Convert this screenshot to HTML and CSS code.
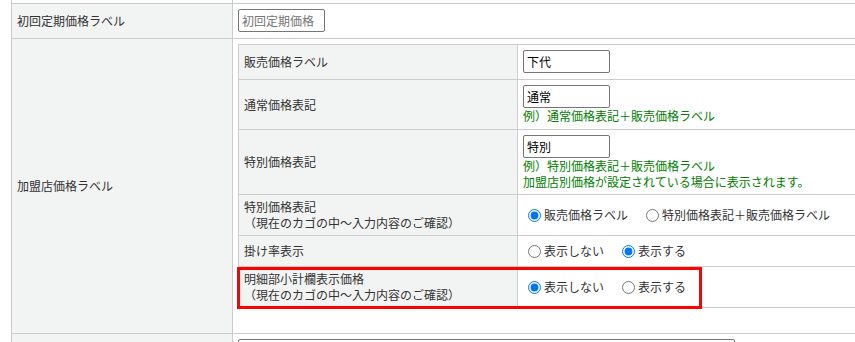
FILE: index.html
```html
<!DOCTYPE html>
<html lang="ja">
<head>
<meta charset="utf-8">
<title>加盟店価格ラベル</title>
<link rel="stylesheet" href="styles.css">
</head>
<body>
<div class="page">
  <table class="form">
    <tr class="blank-row"><th class="blank"></th><td class="blank"></td></tr>
    <tr>
      <th class="main-th">初回定期価格ラベル</th>
      <td class="main-td"><input class="txt" type="text" placeholder="初回定期価格"></td>
    </tr>
    <tr>
      <th class="main-th">加盟店価格ラベル</th>
      <td class="main-td">
        <div class="sub-wrap">
          <table class="sub">
            <tr>
              <th class="sub-th">販売価格ラベル</th>
              <td class="sub-td"><input class="txt" type="text" value="下代"></td>
            </tr>
            <tr>
              <th class="sub-th">通常価格表記</th>
              <td class="sub-td">
                <input class="txt" type="text" value="通常">
                <p class="note">例）通常価格表記＋販売価格ラベル</p>
              </td>
            </tr>
            <tr>
              <th class="sub-th">特別価格表記</th>
              <td class="sub-td">
                <input class="txt" type="text" value="特別">
                <p class="note two">例）特別価格表記＋販売価格ラベル<br>加盟店別価格が設定されている場合に表示されます。</p>
              </td>
            </tr>
            <tr>
              <th class="sub-th">特別価格表記<br>（現在のカゴの中～入力内容のご確認）</th>
              <td class="sub-td">
                <div class="radios">
                  <label class="opt"><input type="radio" name="sp" checked>販売価格ラベル</label>
                  <label class="opt"><input type="radio" name="sp">特別価格表記＋販売価格ラベル</label>
                </div>
              </td>
            </tr>
            <tr>
              <th class="sub-th">掛け率表示</th>
              <td class="sub-td">
                <div class="radios">
                  <label class="opt"><input type="radio" name="rate">表示しない</label>
                  <label class="opt"><input type="radio" name="rate" checked>表示する</label>
                </div>
              </td>
            </tr>
            <tr>
              <th class="sub-th">明細部小計欄表示価格<br>（現在のカゴの中～入力内容のご確認）</th>
              <td class="sub-td">
                <div class="radios">
                  <label class="opt"><input type="radio" name="sub" checked>表示しない</label>
                  <label class="opt"><input type="radio" name="sub">表示する</label>
                </div>
              </td>
            </tr>
          </table>
          <div class="highlight"></div>
        </div>
      </td>
    </tr>
    <tr>
      <th class="main-th"></th>
      <td class="main-td"><input class="txt wide" type="text"></td>
    </tr>
  </table>
</div>
</body>
</html>
```

FILE: styles.css
```css
html, body {
  margin: 0;
  padding: 0;
  background: #fff;
  overflow: hidden;
}

body {
  font-family: "Noto Sans CJK JP", "Noto Sans", sans-serif;
  font-size: 12px;
  line-height: 16px;
  color: #333;
}

.page {
  padding-left: 11px;
  margin-top: -20px;
}

.form {
  border-collapse: collapse;
  width: 1100px;
}

.main-th,
.main-td,
.blank {
  border: 1px solid #cccccc;
  padding: 5px;
  vertical-align: middle;
}

.main-th {
  width: 210px;
  background: #f2f3f3;
  font-weight: normal;
  text-align: left;
}

.main-td {
  background: #fff;
  padding-bottom: 25px;
}

.main-td:has(> .txt) {
  padding-bottom: 5px;
}

.blank {
  height: 22px;
  padding: 0;
  background: #fff;
}

.sub-wrap {
  position: relative;
}

.sub {
  border-collapse: collapse;
  width: 100%;
}

.sub-th,
.sub-td {
  border: 1px solid #cccccc;
  vertical-align: middle;
  text-align: left;
}

.sub-th {
  width: 268px;
  padding: 4px 5px;
  background: #f2f3f3;
  font-weight: normal;
}

.sub-td {
  padding: 5px;
  background: #fff;
}

.txt {
  display: block;
  box-sizing: border-box;
  width: 87px;
  height: 23px;
  margin: 0 0 1px 0;
  padding: 1px 3px;
  border: 1px solid #767676;
  border-radius: 2px;
  font-family: "Noto Sans CJK JP", "Noto Sans", sans-serif;
  font-size: 12px;
  color: #000;
  background: #fff;
}

.txt::placeholder {
  color: #757575;
}

.wide {
  width: 497px;
}

.note {
  margin: -1px 0 0 0;
  color: #008000;
  line-height: 16px;
}

.note.two {
  margin-bottom: -1px;
}

.radios {
  display: flex;
  align-items: center;
  height: 20px;
}

.opt {
  display: flex;
  align-items: center;
  margin-right: 13px;
}

.opt input {
  width: 13px;
  height: 13px;
  margin: 0 3px 0 5px;
}

.highlight {
  position: absolute;
  left: -1px;
  top: 223px;
  width: 465px;
  height: 42px;
  box-sizing: border-box;
  border: 3px solid #ff0000;
}
```
